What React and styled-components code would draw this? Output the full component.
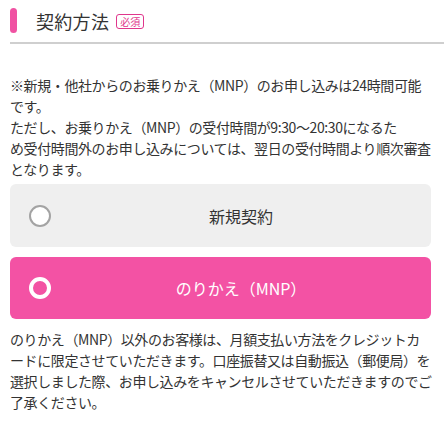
import React, { useState } from 'react';
import styled, { createGlobalStyle } from 'styled-components';

const GlobalStyle = createGlobalStyle`
  body {
    margin: 0;
    background: #ffffff;
    font-family: "Noto Sans CJK JP", "Noto Sans", sans-serif;
    color: #333333;
  }
`;

const Section = styled.section`
  width: 444px;
  padding: 8px 0 0 10px;
  box-sizing: border-box;
`;

const Header = styled.div`
  display: flex;
  align-items: center;
  height: 25px;
  padding-bottom: 9px;
  border-bottom: 2px solid #cfcfcf;
`;

const HeaderBar = styled.span`
  width: 7px;
  height: 25px;
  border-radius: 4px;
  background: #f052a2;
  margin-right: 19px;
`;

const Title = styled.h2`
  margin: 0;
  font-size: 18px;
  font-weight: 400;
  color: #333;
  letter-spacing: 0.3px;
`;

const Badge = styled.span`
  display: inline-flex;
  align-items: center;
  justify-content: center;
  margin: 2px 0 0 7px;
  height: 15px;
  padding: 0 3px;
  box-sizing: border-box;
  border: 1.5px solid #e0368c;
  border-radius: 3px;
  font-size: 10px;
  line-height: 1;
  color: #e0368c;
`;

const Body = styled.div`
  padding-right: 2px;
`;

const Note = styled.p`
  margin: ${props => props.top || 0}px 0 0;
  font-size: 14px;
  line-height: 21px;
  letter-spacing: -0.4px;
  color: #333;
`;

const Options = styled.div`
  display: flex;
  flex-direction: column;
  gap: 10px;
  margin: 4px 11px 0 0;
`;

const Option = styled.button`
  display: flex;
  align-items: center;
  height: ${props => props.h}px;
  padding: 0 0 0 19px;
  border: none;
  border-radius: 6px;
  background: ${props => (props.selected ? '#f352a4' : '#efefef')};
  cursor: pointer;
  font-family: inherit;
`;

const Radio = styled.span`
  box-sizing: border-box;
  width: 22px;
  height: 22px;
  border-radius: 50%;
  flex-shrink: 0;
  border: ${props => (props.selected ? '4px solid #ffffff' : '2px solid #a3a3a3')};
  background: ${props => (props.selected ? 'transparent' : '#ffffff')};
`;

const OptionLabel = styled.span`
  flex: 1;
  text-align: center;
  font-size: 16px;
  color: ${props => (props.selected ? '#ffffff' : '#333333')};
`;

const options = [
  { id: 'new', label: '新規契約', h: 63 },
  { id: 'mnp', label: 'のりかえ（MNP）', h: 62 }
];

const App = () => {
  const [value, setValue] = useState('mnp');

  return (
    <>
      <GlobalStyle />
      <Section>
        <Header>
          <HeaderBar />
          <Title>契約方法</Title>
          <Badge>必須</Badge>
        </Header>

        <Body>
          <Note top={31}>
            ※新規・他社からのお乗りかえ（MNP）のお申し込みは24時間可能
            <br />
            です。
            <br />
            ただし、お乗りかえ（MNP）の受付時間が9:30～20:30になるた
            <br />
            め受付時間外のお申し込みについては、翌日の受付時間より順次審査
            <br />
            となります。
          </Note>

          <Options>
            {options.map(opt => (
              <Option
                key={opt.id}
                h={opt.h}
                selected={value === opt.id}
                onClick={() => setValue(opt.id)}
              >
                <Radio selected={value === opt.id} />
                <OptionLabel selected={value === opt.id}>{opt.label}</OptionLabel>
              </Option>
            ))}
          </Options>

          <Note top={10}>
            のりかえ（MNP）以外のお客様は、月額支払い方法をクレジットカ
            <br />
            ードに限定させていただきます。口座振替又は自動振込（郵便局）を
            <br />
            選択しました際、お申し込みをキャンセルさせていただきますのでご
            <br />
            了承ください。
          </Note>
        </Body>
      </Section>
    </>
  );
};

export default App;
